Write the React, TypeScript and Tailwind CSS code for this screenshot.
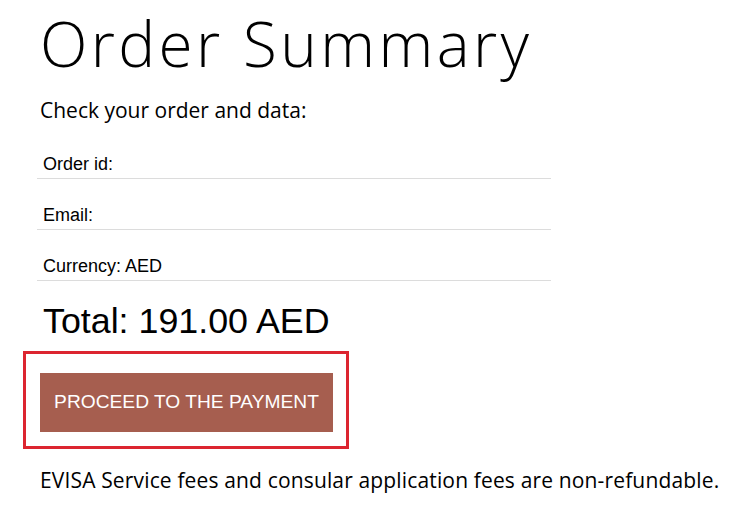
export default function App() {
  const rows = ["Order id:", "Email:", "Currency: AED"];
  return (
    <div className="min-h-screen bg-white pl-[40px] pt-[12px] text-black">
      <h1 className="font-['Open_Sans',sans-serif] text-[62px] font-light leading-[62px] tracking-[3.4px]">
        Order Summary
      </h1>
      <p className="mt-[24px] font-['Open_Sans',sans-serif] text-[21px] leading-[24px] tracking-[0px]">
        Check your order and data:
      </p>
      <div className="ml-[-3px] mt-[6px] w-[514px] font-['Liberation_Sans',Arial,sans-serif]">
        {rows.map((r) => (
          <div
            key={r}
            className="flex h-[51px] items-end border-b-[1.5px] border-[#dcdcdc] pb-[4px] pl-[6px] text-[18px] leading-[20px]"
          >
            {r}
          </div>
        ))}
      </div>
      <div className="mt-[21px] pl-[3px] font-['Liberation_Sans',Arial,sans-serif] text-[35.8px] leading-[38px]">
        Total: 191.00 AED
      </div>
      <div className="ml-[-17px] mt-[11px] w-[326px] border-[3px] border-[#dc2530] pb-[14px] pl-[14px] pt-[19px]">
        <button className="flex h-[59px] w-[293px] items-center justify-center bg-[#a65e4f] font-['Liberation_Sans',Arial,sans-serif] text-[19.2px] text-white">
          PROCEED TO THE PAYMENT
        </button>
      </div>
      <p className="mt-[19px] font-['Open_Sans',sans-serif] text-[21px] leading-[24px] tracking-[0.15px]">
        EVISA Service fees and consular application fees are non-refundable.
      </p>
    </div>
  );
}
